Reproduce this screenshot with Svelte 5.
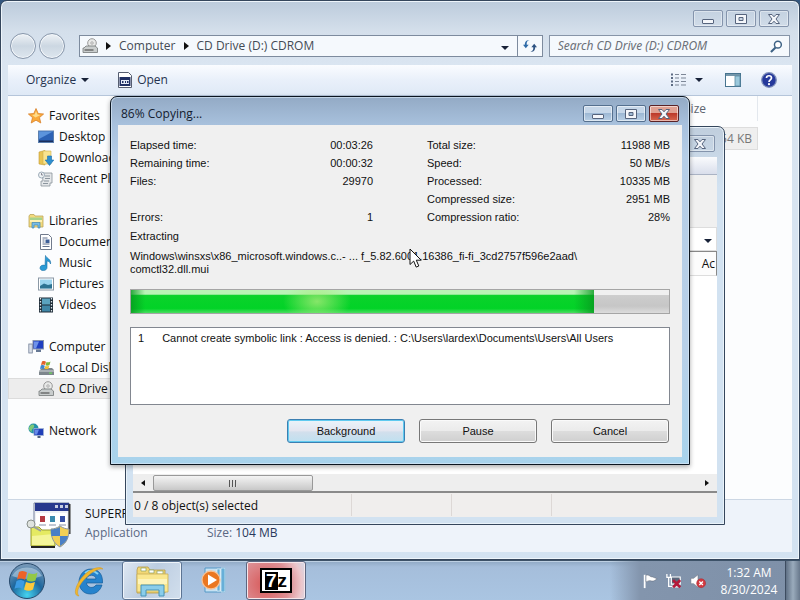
<script>
  const groups = [
    { name: 'Favorites', icon: 'star', items: [['Desktop', 'desktop'], ['Downloads', 'downloads'], ['Recent Places', 'recent']] },
    { name: 'Libraries', icon: 'library', items: [['Documents', 'document'], ['Music', 'music'], ['Pictures', 'picture'], ['Videos', 'video']] },
    { name: 'Computer', icon: 'computer', items: [['Local Disk (C:)', 'disk'], ['CD Drive (D:)', 'cd']] },
    { name: 'Network', icon: 'network', items: [] }
  ];
  const selected = 'CD Drive (D:)';
  const left = [['Elapsed time:', '00:03:26'], ['Remaining time:', '00:00:32'], ['Files:', '29970'], null, ['Errors:', '1']];
  const right = [['Total size:', '11988 MB'], ['Speed:', '50 MB/s'], ['Processed:', '10335 MB'], ['Compressed size:', '2951 MB'], ['Compression ratio:', '28%']];
  const progress = 86;
</script>

{#snippet icon(name)}
  <svg class="ico" viewBox="0 0 16 16" aria-hidden="true">
    {#if name === 'star'}
      <path d="M8 .5l2.200 5 5.400.5-4.100 3.600 1.300 5.400L8 12.200 3.200 15l1.300-5.400L.4 6l5.400-.5z" fill="#f9a93a" stroke="#d9822b" stroke-width=".8" />
      <path d="M8 3l1.500 3.500 3 .5-5 2.500-3.500-2.500 2.700-.5z" fill="#ffdc8a" />
    {:else if name === 'desktop'}
      <rect x=".5" y="2" width="15" height="11.500" fill="#2c62b5" stroke="#5b7fae" />
      <path d="M1 2.500h14L1 10z" fill="#5c94dc" /><rect x="1" y="11.500" width="14" height="1.500" fill="#1b2f5d" />
    {:else if name === 'downloads'}
      <path d="M1 2l6-1.500V15l-6-1z" fill="#e8c453" stroke="#c49c35" stroke-width=".6" /><path d="M5 1h8v13H5z" fill="#f9e48f" stroke="#cfae4c" stroke-width=".6" />
      <path d="M9.500 6h4v4h2.300L11.500 15.500 7.200 10h2.300z" fill="#2e8fd0" stroke="#1d6fae" stroke-width=".6" />
    {:else if name === 'recent'}
      <path d="M4 2h10v10h-2v3H3v-5h2z" fill="#e4e7e9" stroke="#89929a" stroke-width=".8" /><path d="M7 5h5M7 7.500h5M6 10h5M5 12.500h5" stroke="#8b959e" />
      <circle cx="3.500" cy="4" r="3" fill="#eef2f3" stroke="#89a" stroke-width=".8" /><path d="M3.500 2v2H5" fill="none" stroke="#667" stroke-width=".7" />
    {:else if name === 'library'}
      <path d="M1 3l1-1.500h4L7 3h8v11H1z" fill="#f3da7d" stroke="#bba65a" stroke-width=".8" /><path d="M2 4.500h12v3H2z" fill="#a7d38c" />
      <path d="M2 7h12v2H2z" fill="#fdf1b5" /><path d="M4 15V9.500h8V15h-2v-3H6v3z" fill="#79bce6" stroke="#3d86b8" stroke-width=".7" />
    {:else if name === 'document'}
      <path d="M2.500.5h8l3 3v12h-11z" fill="#fff" stroke="#717b8c" /><path d="M4.500 4h5M4.500 6h2M4.500 8h2M4.500 10h7M4.500 12.500h7" stroke="#61708d" /><rect x="7.500" y="5.500" width="4" height="3.500" fill="#3d5f97" />
    {:else if name === 'music'}
      <path d="M7.500.5c1 3 6 3.500 5 8.500-.5-2-2-3-3.500-3v6.500c0 4-7 4-7 .5 0-2.500 3-3.500 5-2.500z" fill="#2a9bd6" stroke="#1a6fa5" stroke-width=".6" />
    {:else if name === 'picture'}
      <rect x=".5" y="2" width="15" height="12" fill="#fff" stroke="#8a98a5" /><rect x="2" y="3.500" width="12" height="9" fill="#9bd4ee" /><path d="M2 12.500V10l4-2.500 4 1.500 4-1v4.500z" fill="#2d7392" />
    {:else if name === 'video'}
      <rect x="1" y=".5" width="14" height="15" fill="#1f2d38" /><rect x="4" y="1.500" width="8" height="6" fill="#5ba3bf" /><rect x="4" y="8.500" width="8" height="6" fill="#3f86a6" />
      <path d="M2.500 1v14M13.500 1v14" stroke="#dbe5ea" stroke-width="1.300" stroke-dasharray="1.500 1.500" />
    {:else if name === 'computer'}
      <rect x="5" y="1.500" width="10.500" height="8.500" fill="#1f3fc0" stroke="#8794ad" /><path d="M6 2.500h5l-3 7H6z" fill="#6d92ea" /><path d="M8 10.500h5v2.500H8z" fill="#667894" />
      <rect x=".8" y="5" width="3.500" height="9" fill="#d7dde6" stroke="#76839b" stroke-width=".8" />
    {:else if name === 'disk'}
      <path d="M2 10l2-2h10l2 2v5H1v-4z" fill="#7e878d" /><path d="M1 11h15" stroke="#d4d9dc" /><rect x="11" y="12.500" width="3" height="1.200" fill="#6ddc5a" />
      <path d="M4 1.500c2-1 3 0 4 .3L7 5C6 4.500 5 4 3 5z" fill="#e2622b" /><path d="M8.500 2c1 .5 2.500.5 4-.5l-1 3.500c-1.500.8-3 .8-4 .2z" fill="#7cb83d" /><path d="M2.800 5.500c2-1 3-.3 4 .2L6 9C5 8.500 4 8 2 9z" fill="#3d86cf" /><path d="M7.300 6c1 .5 2.500.5 4-.5l-1 3.500H6.500z" fill="#f0bd32" />
    {:else if name === 'cd'}
      <circle cx="10" cy="5" r="4.300" fill="#e8e9e8" stroke="#999" /><circle cx="10" cy="5" r="1.200" fill="#fff" stroke="#888" stroke-width=".7" />
      <path d="M2 10l2-2h9l2.500 2v4.500H1V10z" fill="#c9cdcd" stroke="#737878" stroke-width=".8" /><path d="M2.500 12h9" stroke="#555" stroke-width="1.200" />
    {:else if name === 'network'}
      <circle cx="5.500" cy="5.500" r="5" fill="#2390a9" /><path d="M2 3c3-3 5-1 4 1S3 6 4 9C1 8 0 5 2 3z" fill="#7dc979" /><rect x="6" y="5.500" width="9.500" height="7" fill="#203fb8" stroke="#a1b2d4" stroke-width=".8" /><path d="M7 6.500h4l-2 5H7z" fill="#658be8" /><path d="M9.500 13h3v2h-3z" fill="#51617f" />
    {/if}
  </svg>
{/snippet}

{#snippet caption(active)}
  <div class="caption" class:active>
    <button aria-label="Minimize"><svg viewBox="0 0 14 12"><rect x="1.500" y="6.500" width="11" height="4" rx=".5" /></svg></button>
    <button aria-label="Maximize"><svg viewBox="0 0 14 12"><path fill-rule="evenodd" d="M1.500 1.500h11v9h-11zM5 4.500v3h4v-3z" /></svg></button>
    <button class="close" aria-label="Close"><svg viewBox="0 0 14 12"><path d="M1.500 1.500h3.500l2 2.300 2-2.300h3.500L9 6l3.500 4.500H9L7 8.200 5 10.500H1.500L5 6z" /></svg></button>
  </div>
{/snippet}

<div class="desktop">
  <section class="window explorer" aria-label="CD Drive (D:) CDROM">
    <header class="top">{@render caption(false)}</header>
    <div class="address">
      <div class="travel">
        <button aria-label="Back"></button><button aria-label="Forward"></button>
      </div>
      <nav class="crumbs" aria-label="Address">
        {@render icon('cd')}
        <i class="tri"></i><a href="#computer">Computer</a>
        <i class="tri"></i><a href="#drive">CD Drive (D:) CDROM</a>
        <button class="drop" aria-label="Previous locations"><i class="down"></i></button>
        <button class="refresh" aria-label="Refresh">
          <svg viewBox="0 0 16 16"><path d="M7.500 1.500C4.500 2 4 4 4.300 6.500H6.500L3.200 10.500 0 6.500h2C2 3 4 .8 7.500 1.500z" fill="#2e6ba8" /><path d="M8.500 14.500c3-.5 3.500-2.500 3.200-5H9.500l3.300-4L16 9.500h-2c0 3.500-2 5.700-5.500 5z" fill="#2f5483" /></svg>
        </button>
      </nav>
      <div class="search">
        <input type="search" aria-label="Search" placeholder="Search CD Drive (D:) CDROM" />
        <svg viewBox="0 0 14 14"><circle cx="8.500" cy="5" r="3.700" fill="#fff" stroke="#3d6285" stroke-width="1.600" /><path d="M6 8l-5 5" stroke="#3d6285" stroke-width="2.200" /></svg>
      </div>
    </div>
    <div class="tools">
      <button class="organize">Organize <i class="down"></i></button>
      <button class="open">
        <svg viewBox="0 0 14 16"><path d="M.5.5h10l3 3v12H.5z" fill="#fff" stroke="#555d70" /><rect x="1.500" y="5" width="11" height="9" fill="#1f2f63" /><path d="M3 8h8v4H3z" fill="#e3e9f5" /><path d="M4 10h1.500M7 10h1M9 10h1.500" stroke="#1f2f63" stroke-width="2" /></svg>
        Open
      </button>
      <span class="grow"></span>
      <button aria-label="Change your view"><svg class="view" viewBox="0 0 16 14"><path d="M1 1.500h2M1 5h2M1 8.500h2M1 12h2" stroke="#5c6b83" stroke-width="2" /><path d="M5 1.500h4M5 5h4M5 8.500h4M5 12h4M11 1.500h5M11 5h5M11 8.500h5M11 12h5" stroke="#7d8797" /></svg></button>
      <button class="more" aria-label="More options"><i class="down"></i></button>
      <button class="pane" aria-label="Preview pane"><svg class="view" viewBox="0 0 16 14"><rect x=".5" y=".5" width="15" height="13" fill="#fff" stroke="#47748f" /><path d="M1 2h14" stroke="#47748f" stroke-width="1.500" /><rect x="10" y="3" width="5" height="10" fill="#9bc9dc" stroke="#5b8aa2" stroke-width=".8" /></svg></button>
      <button aria-label="Help"><svg class="help" viewBox="0 0 16 16"><circle cx="8" cy="8" r="7.300" fill="#26399b" stroke="#8090ba" stroke-width="1.300" /><path d="M5.500 6C5.500 3 10.500 3 10.500 6 10.500 7.800 8 8 8 10" fill="none" stroke="#fff" stroke-width="1.700" /><circle cx="8" cy="12.200" r="1.100" fill="#fff" /></svg></button>
    </div>
    <div class="body">
      <nav class="tree" aria-label="Folders">
        {#each groups as g}
          <div class="group">
            <a href="#{g.icon}">{@render icon(g.icon)}{g.name}</a>
            {#each g.items as [label, ic]}
              <a class="child" class:selected={label === selected} href="#{ic}">{@render icon(ic)}{label}</a>
            {/each}
          </div>
        {/each}
      </nav>
      <table class="files">
        <thead><tr><th class="size">Size</th></tr></thead>
        <tbody><tr><td class="size">54 KB</td></tr></tbody>
      </table>
    </div>
    <footer class="details">
      <svg viewBox="0 0 46 46" aria-hidden="true">
        <path d="M8 1h35v31H8z" fill="#eef0f5" stroke="#77809b" /><path d="M9 1h34v8H9z" fill="#27388e" /><path d="M29 3h3v3h-3zM34 3h3v3h-3zM39 3h3v3h-3z" fill="#c6cce2" />
        <path d="M43.500 2v30" stroke="#333" stroke-width="2" /><path d="M10 11h31v20H10z" fill="#fff" />
        <g><rect x="14" y="14" width="5" height="6" fill="#b53a42" /><rect x="24" y="14" width="5" height="6" fill="#3b8aae" /><rect x="34" y="14" width="5" height="6" fill="#3650a7" /><path d="M13 23h7M23 23h7M33 23h7" stroke="#8790a6" /></g>
        <path d="M5 25h8l3 3h13v16H5z" fill="#e5ea62" stroke="#9a9e35" /><path d="M6 34l22-2v11H6z" fill="#f4f59a" /><path d="M5 45h24" stroke="#222" stroke-width="2" />
        <circle cx="5" cy="22" r="4" fill="#dfe3df" stroke="#89908c" /><path d="M8 25l7 4" stroke="#9aa098" stroke-width="2" />
        <path d="M34 24c3 2 6 3 9 3 0 8-2 14-9 18-7-4-9-10-9-18 3 0 6-1 9-3z" fill="#f2cf55" stroke="#8b96a5" /><path d="M34 25v9h-8.500c-.5-2-.5-4-.5-6.500 3 0 6-1 9-2.500zM34 34h8c-1 5-4 8-8 10z" fill="#4a7fc5" />
      </svg>
      <div class="facts">
        <strong>SUPERR</strong>
        <span class="kind">Application</span>
        <span class="kind">Size: <b>104 MB</b></span>
      </div>
    </footer>
  </section>

  <section class="window archiver" aria-label="Archive">
    <header class="top">{@render caption(false)}</header>
    <div class="client">
      <div class="menu"></div>
      <div class="ribbon"></div>
      <div class="path"><button aria-label="Folder list"><i class="down"></i></button></div>
      <div class="columns"><span>Ac</span></div>
      <div class="list"></div>
      <div class="scroll">
        <button aria-label="Scroll left"><i class="tri flip"></i></button>
        <div class="thumb"><i></i><i></i><i></i></div>
        <span class="grow"></span>
        <button aria-label="Scroll right"><i class="tri"></i></button>
      </div>
      <footer class="status"><span class="first">0 / 8 object(s) selected</span><span></span><span></span><span></span></footer>
    </div>
  </section>

  <section class="window dialog" role="dialog" aria-label="Copying">
    <header class="top"><h1>{progress}% Copying...</h1>{@render caption(true)}</header>
    <div class="client">
      <div class="stats">
        {#each [left, right] as col}
          <dl>
            {#each col as row}
              <div>{#if row}<dt>{row[0]}</dt><dd>{row[1]}</dd>{/if}</div>
            {/each}
          </dl>
        {/each}
      </div>
      <p class="stage">Extracting</p>
      <p class="file">Windows\winsxs\x86_microsoft.windows.c..- ... f_5.82.6001.16386_fi-fi_3cd2757f596e2aad\<br />comctl32.dll.mui</p>
      <div class="progress" role="progressbar" aria-valuenow={progress} aria-label="Progress"><div style="width: {progress}%"></div></div>
      <ol class="errors"><li><span>1</span>Cannot create symbolic link : Access is denied. : C:\Users\lardex\Documents\Users\All Users</li></ol>
      <div class="actions">
        <button class="default">Background</button><button>Pause</button><button>Cancel</button>
      </div>
    </div>
  </section>

  <footer class="taskbar">
    <button class="orb" aria-label="Start">
      <svg viewBox="0 0 38 38">
        <defs><radialGradient id="orb" cx=".5" cy=".9" r=".9"><stop offset="0" stop-color="#45d3ef" /><stop offset=".5" stop-color="#1d679e" /><stop offset="1" stop-color="#7d9cba" /></radialGradient></defs>
        <circle cx="19" cy="19" r="17.500" fill="url(#orb)" stroke="#27496b" /><path d="M4 14a16 13 0 0 1 30 0q-15 6-30 0z" fill="#d9e9f4" opacity=".45" />
        <path d="M11 10c3-2 6-1 8 .5l-2 7.500c-2-1.500-5-2-8-.5z" fill="#ed6328" /><path d="M20.500 11c3 1.500 6 1.500 9-.5l-2 8c-3 1.500-6 1-9-.3z" fill="#93c845" /><path d="M8.500 19c3-1.500 6-1 8 .5l-2 7.500c-2-1.500-5-2-8-.3z" fill="#3c9be3" /><path d="M18 20c3 1.500 6 1.500 9 0l-2 7.500c-3 1.800-6 1.500-9 0z" fill="#fcc93b" />
      </svg>
    </button>
    <button class="task ie" aria-label="Internet Explorer">
      <svg viewBox="0 0 34 32"><path fill-rule="evenodd" d="M18 4c8 0 12 6 11.500 14H13.500c.5 5 7 6 9.500 2h6c-2 6-6 9-11.500 9C10 29 6 23 6 17S10 4 18 4zM13.500 14h9.500c-.5-5-8.500-5-9.500 0z" fill="#2683cd" stroke="#145c99" stroke-width=".7" /><path d="M12 8c4-3 9-3 13 1" fill="none" stroke="#83d1f2" stroke-width="2" /><path d="M30 4C26 0 14 5 7 15 1 24 1 31 6 31c-3-3-1-9 4-15 7-8 15-13 20-12z" fill="#f1b72d" stroke="#cf9520" stroke-width=".5" /></svg>
    </button>
    <button class="task open-task" aria-label="Windows Explorer">
      <svg viewBox="0 0 34 32"><path d="M2 5l1-3h10l2 3h15v23H2z" fill="#f2d775" stroke="#b79b47" stroke-width=".8" /><path d="M6 3h5v3H6zM14 5h5v3h-5zM22 6h6v3h-6z" fill="#fff" stroke="#8ba05c" stroke-width=".7" /><path d="M2 9h31v18H2z" fill="#fae78f" stroke="#c9ae56" stroke-width=".8" /><path d="M3 14h29v5H3z" fill="#fdf4bc" /><path d="M6 31V20h23v11h-5v-6H11v6z" fill="#8acdea" stroke="#4793b8" /></svg>
    </button>
    <button class="task" aria-label="Media Player">
      <svg viewBox="0 0 34 32"><path d="M8 3h20v24H8z" fill="#c6e1f2" stroke="#5298c6" /><path d="M24 3h4v24h-4zM20 4h3v22h-3z" fill="#67afd8" stroke="#e2f0f8" stroke-width=".7" /><circle cx="14" cy="15" r="9" fill="#ea7721" stroke="#f7c295" stroke-width="1.300" /><path d="M11 9.500l9 5.500-9 5.500z" fill="#fff" /></svg>
    </button>
    <button class="task seven" aria-label="7-Zip"><span class="logo"><b>7</b><i>z</i></span></button>
    <span class="grow"></span>
    <div class="tray">
      <button aria-label="Action Center"><svg viewBox="0 0 18 18"><path d="M3 2v15" stroke="#fff" stroke-width="2" /><path d="M4.500 2.500C8 1 9 5 12 4.500l5 2c-3 2-4 3-6 2.500-3-1-4 0-6.500 1z" fill="#fff" stroke="#58606d" stroke-width=".5" /></svg></button>
      <button aria-label="Network"><svg viewBox="0 0 18 18"><path d="M6 4.500h10v8H6z" fill="#5b687c" stroke="#fff" stroke-width="1.300" /><path d="M1 1v4h4V1M3 5v10h5M7 15.500h8" fill="none" stroke="#fff" stroke-width="1.400" /><path d="M8 8l8 8M16 8l-8 8" stroke="#b5183a" stroke-width="3" /></svg></button>
      <button aria-label="Volume"><svg viewBox="0 0 18 18"><path d="M1 6h3l5-4v14l-5-4H1z" fill="#fff" stroke="#69707c" stroke-width=".6" /><circle cx="12.500" cy="11.500" r="5" fill="#d33a41" stroke="#a62a32" stroke-width=".6" /><path d="M10.500 9.500l4 4M14.500 9.500l-4 4" stroke="#fff" stroke-width="1.500" /></svg></button>
      <time class="clock"><span>1:32 AM</span><span>8/30/2024</span></time>
      <button class="peek" aria-label="Show desktop"></button>
    </div>
  </footer>

  <svg class="cursor" viewBox="0 0 13 20" aria-hidden="true"><path d="M1 1v15.500l3.700-3.400 2.500 6 2.600-1.100-2.500-5.800h4.900z" fill="#fff" stroke="#111" /></svg>
</div>

<style>
  :global(body) { margin: 0; }
  .desktop { position: relative; height: 100vh; overflow: hidden; background: #33567f; font: 12px/16px "Open Sans", "Noto Sans", sans-serif; color: #111; }
  .desktop, .desktop * { box-sizing: border-box; }
  button { font: inherit; color: inherit; margin: 0; padding: 0; border: 0; background: none; }
  a { color: inherit; text-decoration: none; }
  svg { display: block; flex: none; }
  .grow { flex: 1; }
  .ico { width: 16px; height: 16px; }
  .tri { border: 4px solid transparent; border-left: 5px solid #111; border-right: 0; flex: none; }
  .flip { transform: scaleX(-1); }
  .down { display: inline-block; border: 4px solid transparent; border-top: 4px solid #182238; border-bottom: 0; flex: none; }

  .window { position: absolute; display: flex; flex-direction: column; border: 1px solid #35465c; border-radius: 7px 7px 0 0; }
  .top { display: flex; align-items: flex-start; justify-content: flex-end; flex: none; }
  .caption { display: flex; gap: 3px; }
  .caption button { width: 30px; height: 17px; display: grid; place-items: center; border: 1px solid #8494ac; border-radius: 2px; box-shadow: inset 0 0 0 1px #ffffff66; }
  .caption svg { width: 14px; height: 12px; fill: #f4f6fa; stroke: #56647d; }
  .caption.active button { border-color: #55708f; background: linear-gradient(#c6d7e9 48%, #9db8d4 50%, #b9d0e6); box-shadow: inset 0 0 0 1px #ffffff88; }
  .caption.active .close { border-color: #5a2226; background: linear-gradient(#e0a092 45%, #bd3a2b 50%, #d8674f); }

  .explorer { inset: 0 0 40px; padding: 0 7px 7px; background: linear-gradient(#bccbdc, #d4dfeb 30px, #dae5f1 64px, #d3e2f1); box-shadow: inset 0 0 0 1px #eef5fb; }
  .explorer .top { height: 34px; padding: 9px 3px 0; }
  .address { display: flex; align-items: center; height: 22px; padding: 0 2px; flex: none; margin-bottom: 8px; }
  .travel { display: flex; gap: 3px; width: 69px; flex: none; }
  .travel button { width: 26px; height: 26px; border-radius: 50%; border: 1px solid #8796aa; background: linear-gradient(#eef2f6, #ccd7e2 50%, #dde6ee); box-shadow: inset 0 0 0 1px #f5f8fb; }
  .crumbs { display: flex; align-items: center; gap: 8px; flex: 459; height: 22px; padding-left: 2px; border: 1px solid #7d8b9e; background: #f5f9fd; color: #444b55; }
  .drop { margin-left: auto; width: 8px; height: 20px; }
  .refresh { width: 25px; height: 20px; display: grid; place-items: center; border-left: 1px solid #7d8b9e; }
  .refresh svg { width: 14px; height: 14px; }
  .search { display: flex; align-items: center; flex: 225; margin-left: 6px; height: 22px; padding: 0 6px 0 8px; border: 1px solid #8795a8; background: #f5f9fd; }
  .search input { flex: 1; min-width: 0; padding: 0; border: 0; outline: 0; background: none; font: italic 12px/16px "Noto Sans", sans-serif; }
  .search input::placeholder { color: #6b7078; opacity: 1; }
  .search svg { width: 13px; height: 13px; }
  .tools { display: flex; align-items: center; height: 31px; padding: 0 15px 0 18px; flex: none; background: linear-gradient(#fafcff, #e9f0fa 50%, #dfe9f6); border-bottom: 1px solid #b5c5da; color: #24324e; }
  .tools button { display: flex; align-items: center; gap: 5px; }
  .open { margin-left: 29px; }
  .open svg { width: 14px; height: 16px; }
  .view { width: 16px; height: 14px; }
  .help { width: 16px; height: 16px; }
  .more { margin: 0 22px 0 9px; }
  .pane { margin-right: 20px; }
  .body { display: flex; flex: 1; min-height: 0; background: #fcfdfe; }
  .tree { width: 160px; padding-top: 9px; display: flex; flex-direction: column; gap: 21px; flex: none; }
  .tree a { display: flex; align-items: center; gap: 5px; height: 21px; padding-left: 20px; white-space: nowrap; }
  .tree .child { padding-left: 30px; }
  .tree .selected { background: #ededed; box-shadow: inset 0 0 0 1px #dcdcdc; }
  .files { flex: 1; align-self: flex-start; border-collapse: collapse; margin-right: 34px; }
  .files th { height: 25px; padding: 0; font-weight: 400; text-align: right; padding-right: 51px; color: #5d6570; border-right: 1px solid #e3e8ee; }
  .files td { height: 22px; padding: 0 5px 0 0; text-align: right; color: #777; background: #efefef; border: 1px solid #ddd; }
  .files tbody::before { content: ""; display: block; height: 6px; }
  .details { display: flex; height: 53px; padding: 2px 18px; gap: 13px; flex: none; background: #eef3fa; border-top: 1px solid #ccd7e4; }
  .details svg { width: 46px; height: 46px; }
  .facts { display: grid; grid-template-columns: 122px auto; align-content: start; padding-top: 4px; row-gap: 3px; }
  .facts strong { grid-column: 1 / -1; font-weight: 400; }
  .kind { color: #5a6883; }
  .kind b { font-weight: 400; color: #29395c; }

  .archiver { inset: 126px 75px 75px 125px; padding: 0 7px 7px; background: linear-gradient(#c0cedd, #d2e2f1 60px); box-shadow: inset 0 0 0 1px #eaf3fa; }
  .archiver .top { height: 30px; padding: 8px 2px 0; }
  .archiver .client { flex: 1; min-height: 0; display: flex; flex-direction: column; background: #f0eeed; }
  .menu { height: 18px; background: linear-gradient(#fafbfd, #d9deeb); border-bottom: 1px solid #aab3c4; }
  .ribbon { height: 52px; background: #f0f0f0; }
  .path { height: 24px; background: #fff; border: 1px solid #ddd; display: flex; justify-content: flex-end; }
  .path button { width: 16px; }
  .columns { height: 25px; padding-right: 1px; border: 1px solid #888; border-bottom-color: #ddd; background: #fcfcfc; display: flex; justify-content: flex-end; align-items: center; }
  .list { flex: 1; background: #fff; }
  .scroll { display: flex; height: 19px; align-items: stretch; background: #eee; border-bottom: 2px solid #8a8a8a; padding-top: 1px; }
  .scroll button { width: 20px; display: grid; place-items: center; }
  .scroll .tri { border-width: 3px; border-left-width: 4px; border-right: 0; }
  .thumb { width: 160px; border: 1px solid #999; border-radius: 2px; background: linear-gradient(#f4f4f4, #dedede 50%, #c8c8c8); display: flex; gap: 1px; justify-content: center; align-items: center; }
  .thumb i { width: 2px; height: 7px; background: #555; border-right: 1px solid #ddd; }
  .status { display: flex; height: 24px; align-items: center; }
  .status span { width: 100px; height: 22px; line-height: 24px; border-left: 1px solid #ddd8d6; }
  .status .first { width: 218px; border: 0; padding-left: 1px; }

  .dialog { left: 110px; right: 110px; top: 96px; padding: 0 7px 7px; border-color: #0b1520; background: linear-gradient(#93aac5, #a8c1dd 28px, #b6cee7 60px, #b8d0e8 70%, #a8d3ec); box-shadow: inset 0 0 0 1px #d9e9f6aa, 0 2px 5px #00000055; }
  .dialog .top { height: 28px; padding: 8px 3px 0; }
  .dialog h1 { margin: 0 auto 0 0; font: 12px/18px "Open Sans", sans-serif; color: #14202f; }
  .dialog .client { padding: 11px 12px 14px; background: #f0f0f0; font: 11px/13px "Liberation Sans", Arial, sans-serif; color: #111; }
  .stats { display: grid; grid-template-columns: 1fr 1fr; gap: 54px; }
  .stats dl { margin: 0; }
  .stats dl div { display: flex; justify-content: space-between; height: 18px; align-items: center; }
  .stats dd { margin: 0; }
  .stage { margin: 4px 0 7px; }
  .file { margin: 0; overflow-wrap: anywhere; }
  .progress { margin: 13px 0; height: 25px; border: 1px solid #a5a5a5; background: linear-gradient(#f0f0f0 20%, #cdcdcd 24%, #c6c6c6 70%, #dcdcdc); }
  .progress div { height: 100%; background: radial-gradient(ellipse 34px 22px at 186px 50%, #a6eb79cc, transparent), linear-gradient(90deg, #07981fcc, transparent 14px calc(100% - 20px), #07981fcc), linear-gradient(#b9f3b6 18%, #0bd22b 24%, #02d327 80%, #4adf60); }
  .errors { list-style: none; margin: 0 0 14px; padding: 4px 7px; height: 78px; border: 1px solid #828790; background: #fff; }
  .errors li { display: flex; gap: 18px; }
  .actions { display: flex; justify-content: flex-end; gap: 14px; padding-right: 1px; }
  .actions button { width: 118px; height: 24px; border: 1px solid #777; border-radius: 3px; background: linear-gradient(#f3f3f3, #ebebeb 48%, #dddddd 50%, #cfcfcf); box-shadow: inset 0 0 0 1px #fafafa; }
  .actions .default { border-color: #3c7fb1; background: linear-gradient(#eaf4fa, #e3e6f0 48%, #d2dfec 55%, #bfe0f0); box-shadow: inset 0 0 0 1px #5fcaf0; }

  .taskbar { position: absolute; inset: auto 0 0; height: 40px; display: flex; align-items: stretch; background: linear-gradient(#8fa8c3, #a5bedb 6px, #aac5e2); border-top: 1px solid #3d5268; box-shadow: inset 0 1px #bdd0e3; }
  .taskbar button { display: grid; place-items: center; flex: none; }
  .orb { width: 54px; }
  .orb svg { width: 38px; height: 38px; }
  .task { width: 60px; border-radius: 3px; margin-right: 2px; }
  .task svg { width: 34px; height: 32px; }
  .taskbar .ie { width: 66px; padding-left: 6px; }
  .open-task { border: 1px solid #5c7493; background: linear-gradient(120deg, #dfe8f2, #bccde1 45%, #d2dfed); box-shadow: inset 0 0 0 1px #eef4fa; }
  .seven { border: 1px solid #5c6680; background: radial-gradient(circle at 30% 60%, #d85a5a, #dd9095 55%, #ecc6cb 80%, #d0dcec); box-shadow: inset 0 0 0 1px #f6e6ea; }
  .logo { display: flex; align-items: center; width: 32px; height: 25px; padding: 0 3px; border: 2px solid #000; background: #fff; color: #000; font: bold 19px/18px "Liberation Sans", sans-serif; }
  .logo b { width: 13px; background: #000; color: #fff; }
  .logo i { font-style: normal; }
  .tray { display: flex; align-items: center; width: 190px; background: linear-gradient(90deg, transparent, #8395ad 30px, #7e90a8); }
  .tray button { width: 24px; }
  .tray button:first-child { margin-left: 28px; }
  .tray svg { width: 16px; height: 16px; }
  .clock { display: flex; flex-direction: column; align-items: center; flex: 1; color: #fff; line-height: 17px; padding: 1px 0 0 3px; }
  .tray .peek { width: 15px; align-self: stretch; border-left: 1px solid #3d4c60; background: linear-gradient(90deg, #5f7085, #9aabbc, #68788c); }
  .cursor { position: absolute; left: 409px; top: 248px; width: 13px; height: 20px; }
</style>
